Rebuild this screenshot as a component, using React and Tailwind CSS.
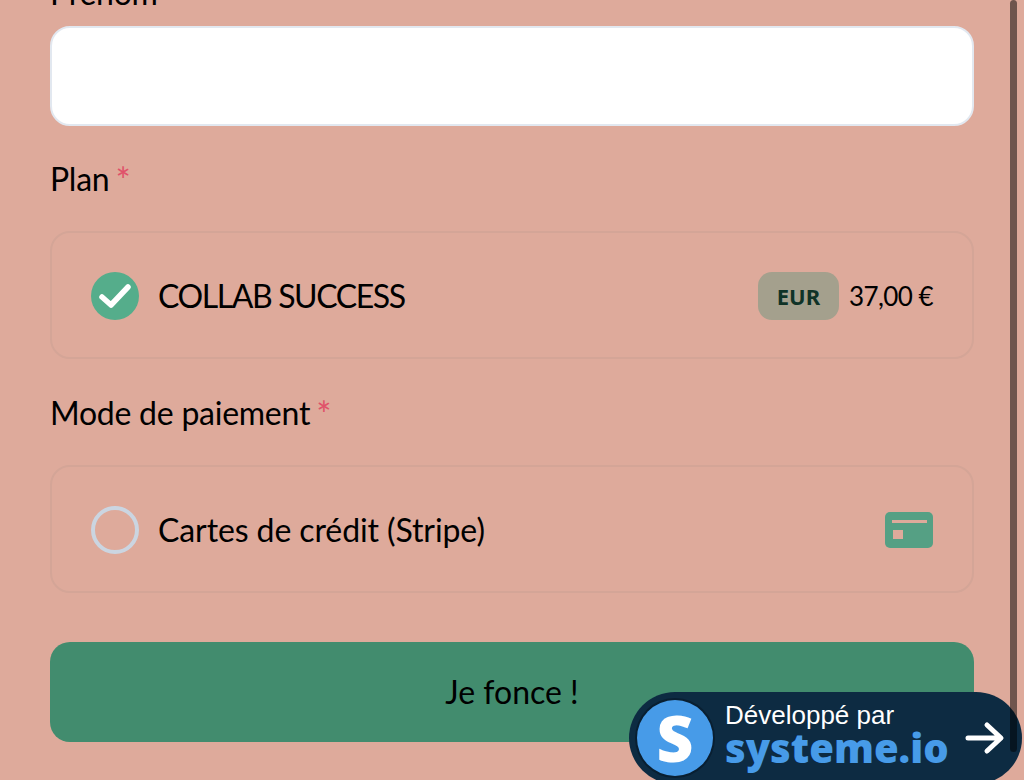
import React from 'react';

function FieldLabel({ children, required }) {
  return (
    <div className="text-[32px] leading-[44px] tracking-[-0.25px] text-black">
      {children}
      {required && <span className="relative top-[3px] ml-[6px] text-[36px] leading-[0] text-[#e0526a]">*</span>}
    </div>
  );
}

export default function App() {
  return (
    <div className="relative h-[780px] w-[1024px] overflow-hidden bg-[#deaa9b] font-['Lato',sans-serif]">
      {/* Form */}
      <div className="-mt-[29px] flex flex-col px-[50px]">
        <FieldLabel>Prénom</FieldLabel>
        <div className="mt-[11px] h-[100px] rounded-[20px] border-2 border-[#e2e8f0] bg-white" />

        <div className="mt-[31px]">
          <FieldLabel required>Plan</FieldLabel>
        </div>
        <div className="mt-[30px] flex h-[128px] items-center rounded-[20px] border-2 border-[#d4a597] px-[39px] pt-[2px]">
          <svg viewBox="0 0 48 48" className="h-[48px] w-[48px]">
            <circle cx="24" cy="24" r="24" fill="#55ad8b" />
            <path d="M11 25l9 8 17-18" fill="none" stroke="#fff" strokeWidth="5.5" strokeLinecap="round" strokeLinejoin="round" />
          </svg>
          <span className="ml-[19px] text-[32px] tracking-[-1.4px] text-black">COLLAB SUCCESS</span>
          <div className="ml-auto flex items-center">
            <span className="flex h-[48px] w-[81px] items-center justify-center rounded-[14px] bg-[#a4a08d] font-['Noto_Sans',sans-serif] text-[22px] font-bold text-[#0f3327]">
              EUR
            </span>
            <span className="ml-[10px] text-[26px] tracking-[-0.55px] text-black">37,00 €</span>
          </div>
        </div>

        <div className="mt-[32px]">
          <FieldLabel required>Mode de paiement</FieldLabel>
        </div>
        <div className="mt-[30px] flex h-[128px] items-center rounded-[20px] border-2 border-[#d4a597] px-[39px] pt-[2px]">
          <div className="h-[48px] w-[48px] rounded-full border-[4px] border-[#cbd5e1]" />
          <span className="ml-[19px] text-[32px] tracking-[-0.1px] text-black">Cartes de crédit (Stripe)</span>
          <svg viewBox="0 0 48 36" className="ml-auto h-[36px] w-[48px]">
            <rect width="48" height="36" rx="5" fill="#55a084" />
            <rect x="7" y="8" width="35" height="3" fill="#deaa9b" />
            <rect x="8" y="18" width="10" height="9" fill="#deaa9b" />
          </svg>
        </div>

        <button className="mt-[49px] h-[100px] rounded-[20px] bg-[#428c6e] text-[32px] text-black">
          Je fonce !
        </button>
      </div>

      {/* systeme.io badge */}
      <div className="absolute left-[629px] top-[692px] flex h-[92px] w-[393px] items-center rounded-[46px] bg-[#0d2b42] font-['Liberation_Sans',sans-serif]">
        <div className="ml-[8px] flex h-[76px] w-[76px] items-center justify-center rounded-full bg-[#479be8] font-['Open_Sans',sans-serif] text-[64px] font-extrabold text-white ring-2 ring-[#091f31]">
          S
        </div>
        <div className="mb-[8px] ml-[12px] flex flex-col">
          <span className="text-[26px] leading-[28px] text-white">Développé par</span>
          <span className="font-['Open_Sans',sans-serif] text-[40px] font-extrabold leading-[38px] text-[#479be8]">
            systeme.io
          </span>
        </div>
        <svg viewBox="0 0 40 34" className="ml-[16px] h-[34px] w-[40px]">
          <path d="M3 17h32M22 4l14 13-14 13" fill="none" stroke="#fff" strokeWidth="5" strokeLinecap="round" strokeLinejoin="round" />
        </svg>
      </div>

      {/* Scrollbar */}
      <div className="absolute right-[7px] top-0 h-[752px] w-[7px] rounded-full bg-black/50" />
    </div>
  );
}
